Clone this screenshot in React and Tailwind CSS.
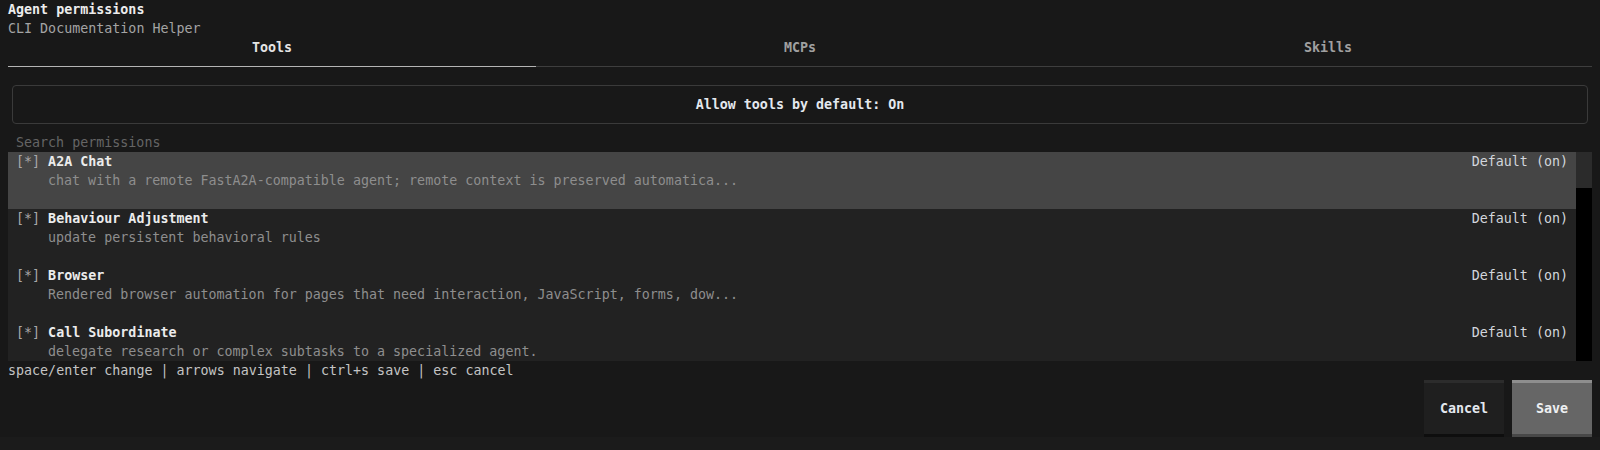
import React from 'react';

// permission rows for the Tools tab
const tools = [
  { id: 'a2a', name: 'A2A Chat', desc: 'chat with a remote FastA2A-compatible agent; remote context is preserved automatica...', state: 'Default (on)' },
  { id: 'behaviour', name: 'Behaviour Adjustment', desc: 'update persistent behavioral rules', state: 'Default (on)' },
  { id: 'browser', name: 'Browser', desc: 'Rendered browser automation for pages that need interaction, JavaScript, forms, dow...', state: 'Default (on)' },
  { id: 'subordinate', name: 'Call Subordinate', desc: 'delegate research or complex subtasks to a specialized agent.', state: 'Default (on)' },
];

const tabs = ['Tools', 'MCPs', 'Skills'];

function PermissionRow({ item, active }) {
  return (
    <div className={`h-[57px] shrink-0 px-2 ${active ? 'bg-[#454545]' : ''}`}>
      <div className="flex h-[19px] items-center justify-between">
        <div className="whitespace-pre">
          <span className="text-[#a8a8a8]">[*] </span>
          <span className="font-bold text-[#ececec]">{item.name}</span>
        </div>
        <span className="text-[#d2d6dc]">{item.state}</span>
      </div>
      <div className="h-[19px] pl-8 whitespace-pre text-[#8e8e8e]">{item.desc}</div>
    </div>
  );
}

export default function App() {
  return (
    <div
      className="flex h-[450px] w-full flex-col bg-[#181818] text-[13.33px] leading-[19px] text-[#d0d0d0]"
      style={{ fontFamily: '"DejaVu Sans Mono", "Liberation Mono", monospace' }}
    >
      <div className="flex flex-col px-2">
        {/* header */}
        <div className="h-[19px] font-bold text-[#ececec]">Agent permissions</div>
        <div className="h-[19px] text-[#a4a4a4]">CLI Documentation Helper</div>

        {/* tabs */}
        <div className="grid h-[19px] grid-cols-3 text-center font-bold">
          {tabs.map((t, i) => (
            <div key={t} className={i === 0 ? 'text-[#e4e4e4]' : 'text-[#a0a0a0]'}>
              {t}
            </div>
          ))}
        </div>
        <div className="grid h-[19px] grid-cols-3 items-center">
          {tabs.map((t, i) => (
            <div key={t} className={`h-px ${i === 0 ? 'bg-[#b4b4b4]' : 'bg-[#3e3e3e]'}`} />
          ))}
        </div>

        {/* default toggle */}
        <div className="h-[57px] px-1 py-[9px]">
          <div className="flex h-full items-center justify-center rounded-[4px] border border-[#3a3a3a] font-bold text-[#e4e8ee]">
            Allow tools by default: On
          </div>
        </div>

        {/* search */}
        <div className="h-[19px] pl-2 text-[#656565]">Search permissions</div>

        {/* list + scrollbar */}
        <div className="flex h-[209px]">
          <div className="flex flex-1 flex-col overflow-hidden bg-[#222222]">
            {tools.map((item, i) => (
              <PermissionRow key={item.id} item={item} active={i === 0} />
            ))}
          </div>
          <div className="w-4 bg-black">
            <div className="h-[36px] bg-[#2b2b2b]" />
          </div>
        </div>

        {/* key hints */}
        <div className="h-[19px] whitespace-pre text-[#c4c4c4]">
          space/enter change | arrows navigate | ctrl+s save | esc cancel
        </div>

        {/* actions */}
        <div className="flex h-[57px] justify-end gap-2">
          <button className="flex w-20 flex-col bg-[#1f1f1f] font-bold text-[#e4e8ee]">
            <div className="h-[3px] w-full bg-[#2c2c2c]" />
            <div className="flex flex-1 items-center justify-center">Cancel</div>
            <div className="h-[3px] w-full bg-[#0e0e0e]" />
          </button>
          <button className="flex w-20 flex-col bg-[#666666] font-bold text-[#eef0f2]">
            <div className="h-[3px] w-full bg-[#8e8e8e]" />
            <div className="flex flex-1 items-center justify-center">Save</div>
            <div className="h-[3px] w-full bg-[#484848]" />
          </button>
        </div>
      </div>
      <div className="flex-1 bg-[#1b1b1b]" />
    </div>
  );
}
